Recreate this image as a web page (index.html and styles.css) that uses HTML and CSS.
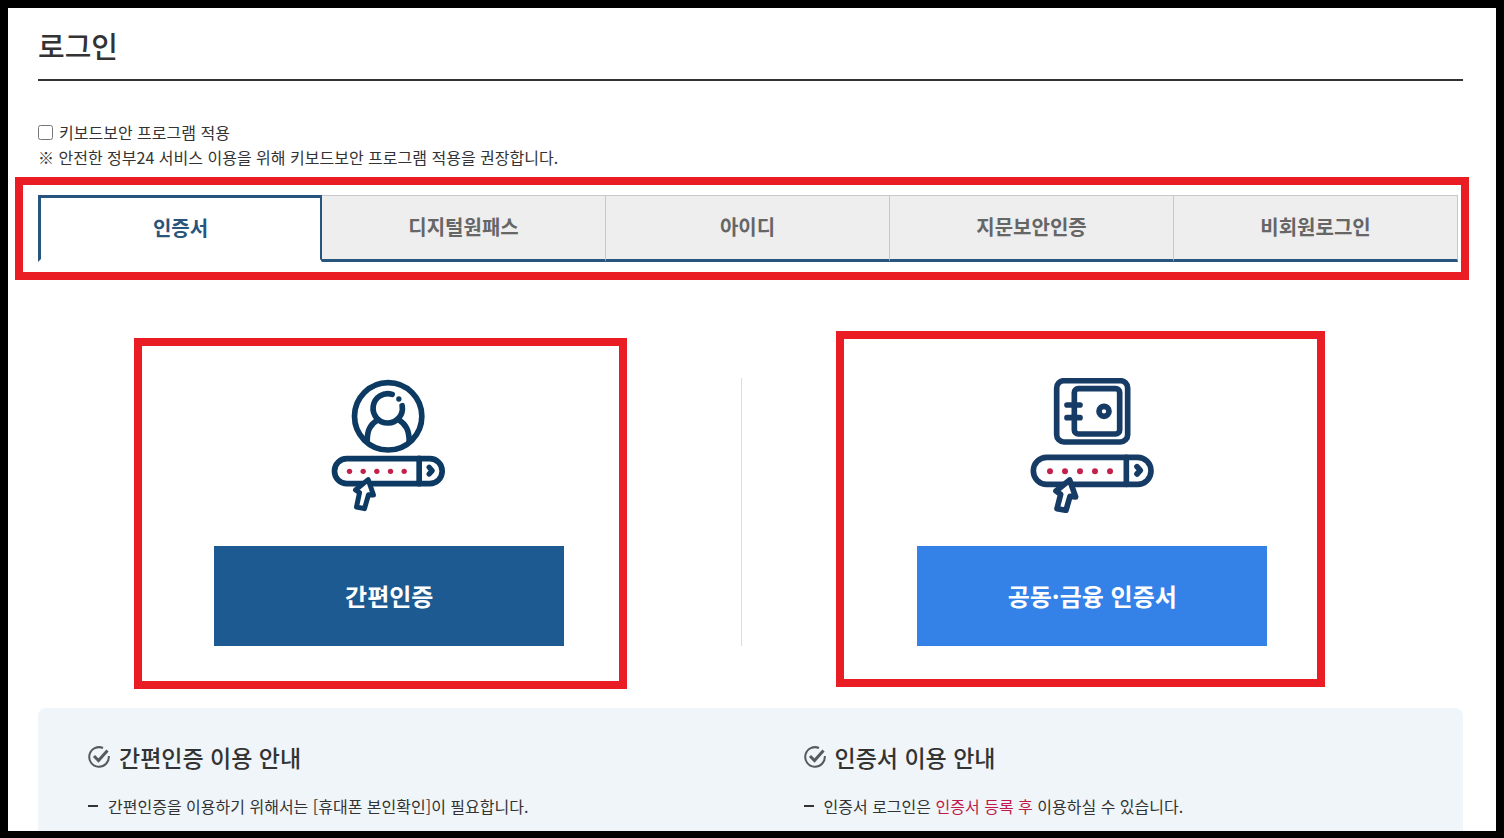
FILE: index.html
```
<!DOCTYPE html>
<html lang="ko">
  <head>
    <meta charset="UTF-8" />
    <meta name="viewport" content="width=device-width, initial-scale=1.0" />
    <title>로그인</title>
    <link rel="stylesheet" href="styles.css">
  </head>
  <body>
    <h1>로그인</h1>

    <div class="security">
      <div class="security-row">
        <input type="checkbox" id="keyboardSecurity" />
        <label for="keyboardSecurity">키보드보안 프로그램 적용</label>
      </div>
      <p>※ 안전한 정부24 서비스 이용을 위해 키보드보안 프로그램 적용을 권장합니다.</p>
    </div>

    <div class="tabs marked" role="tablist">
      <button type="button" class="tab active" role="tab" aria-selected="true">인증서</button>
      <button type="button" class="tab" role="tab">디지털원패스</button>
      <button type="button" class="tab" role="tab">아이디</button>
      <button type="button" class="tab" role="tab">지문보안인증</button>
      <button type="button" class="tab" role="tab">비회원로그인</button>
    </div>

    <div class="methods">
      <div class="method-col">
        <div class="method simple marked">
          <svg width="117" height="135" viewBox="33 24 350 405" fill="none" stroke="#0d3a63" stroke-width="17" stroke-linecap="round" stroke-linejoin="round" aria-hidden="true">
            <circle cx="204" cy="139" r="101" />
            <path d="M216 73 A44 44 0 1 0 246 107" />
            <path d="M141 214 C141 180 150 163 174 149 M267 214 C267 180 257 163 235 149" />
            <circle cx="236" cy="87" r="8" fill="#0d3a63" stroke="none" />
            <rect x="43" y="266" width="323" height="75" rx="37" />
            <path d="M297 265 V341" />
            <path d="M327 292 L336 302 L327 312" stroke-width="16" />
            <g fill="#c4214a" stroke="none">
              <circle cx="88" cy="304" r="8" />
              <circle cx="129" cy="304" r="8" />
              <circle cx="170" cy="304" r="8" />
              <circle cx="211" cy="304" r="8" />
              <circle cx="252" cy="304" r="8" />
            </g>
            <path d="M144 329 L106 360 L118 368 L109 411 L133 416 L145 374 L160 375 Z" fill="#fff" stroke-width="15" />
          </svg>
          <button type="button" class="method-btn">간편인증</button>
        </div>
      </div>
      <div class="method-col">
        <div class="method cert marked">
          <svg width="125" height="135" viewBox="31 24 375 405" fill="none" stroke="#163c66" stroke-width="17" stroke-linecap="round" stroke-linejoin="round" aria-hidden="true">
            <rect x="111" y="32" width="213" height="184" rx="22" />
            <rect x="164" y="56" width="136" height="136" rx="12" />
            <path d="M142 105 H181 M142 143 H181" />
            <circle cx="253" cy="124" r="15" />
            <rect x="41" y="262" width="353" height="81" rx="40" />
            <path d="M320 262 V343" />
            <path d="M352 290 L362 301 L352 312" />
            <g fill="#c4214a" stroke="none">
              <circle cx="91" cy="304" r="9" />
              <circle cx="136" cy="304" r="9" />
              <circle cx="181" cy="304" r="9" />
              <circle cx="226" cy="304" r="9" />
              <circle cx="271" cy="304" r="9" />
            </g>
            <path d="M150 330 L109 363 L123 373 L112 416 L139 421 L151 379 L168 381 Z" fill="#fff" />
          </svg>
          <button type="button" class="method-btn">공동·금융 인증서</button>
        </div>
      </div>
    </div>

    <div class="guide">
      <section>
        <h2>
          <svg class="check" viewBox="0 0 22 22" fill="none" stroke="#555a5e" stroke-width="2" aria-hidden="true">
            <path d="M15 2 A9.8 9.8 0 1 0 20.8 10" />
            <path d="M6 10 L10.5 14.5 L19.5 4.5" stroke-width="3" />
          </svg>
          간편인증 이용 안내
        </h2>
        <ul>
          <li>간편인증을 이용하기 위해서는 [휴대폰 본인확인]이 필요합니다.</li>
        </ul>
      </section>
      <section>
        <h2>
          <svg class="check" viewBox="0 0 22 22" fill="none" stroke="#555a5e" stroke-width="2" aria-hidden="true">
            <path d="M15 2 A9.8 9.8 0 1 0 20.8 10" />
            <path d="M6 10 L10.5 14.5 L19.5 4.5" stroke-width="3" />
          </svg>
          인증서 이용 안내
        </h2>
        <ul>
          <li>인증서 로그인은 <em>인증서 등록 후</em> 이용하실 수 있습니다.</li>
        </ul>
      </section>
    </div>
  </body>
</html>
```
FILE: styles.css
```
* {
  box-sizing: border-box;
}
body {
  display: flex;
  flex-direction: column;
  min-height: 100vh;
  margin: 0;
  padding: 16px 33px 0 30px;
  border: 8px solid #000;
  border-bottom-width: 7px;
  background-color: #fff;
  color: #333;
  font-family: "Noto Sans CJK KR", sans-serif;
  font-size: 16px;
  line-height: 24px;
}
h1 {
  margin: 0;
  padding-bottom: 12px;
  border-bottom: 2px solid #333;
  font-size: 29px;
  font-weight: 500;
  line-height: 43px;
}
.security {
  margin-top: 39px;
  line-height: 25px;
}
.security-row {
  display: flex;
  align-items: center;
}
.security-row input {
  width: 15px;
  height: 15px;
  margin: 0 6px 0 0;
}
.security p {
  margin: 0;
}

/* red frame around the parts to look at */
.marked {
  position: relative;
}
.marked::after {
  content: "";
  position: absolute;
  inset: -18px -11px -18px -23px;
  border: 8px solid #ea1c24;
  pointer-events: none;
}

.tabs {
  display: grid;
  grid-template-columns: repeat(5, 1fr);
  margin: 25px 5px 0 0;
}
.tab {
  height: 67px;
  padding: 0 0 2px;
  border: 1px solid #c8c8c8;
  border-left: none;
  border-bottom: 3px solid #28557d;
  background-color: #eee;
  color: #666;
  font-family: inherit;
  font-size: 20px;
  font-weight: 700;
  cursor: pointer;
}
.tab.active {
  border: 3px solid #28557d;
  border-right-width: 2px;
  border-bottom-color: #fff;
  background-color: #fff;
  color: #28557d;
}

.methods {
  display: grid;
  grid-template-columns: 1fr 1fr;
  margin: 116px 20px 62px 0;
}
.method-col {
  display: flex;
  justify-content: center;
}
.method-col:last-child {
  border-left: 1px solid #ddd;
}
.method {
  display: flex;
  flex-direction: column;
  align-items: center;
  gap: 33px;
  width: 350px;
}
.simple::after {
  inset: -40px -63px -43px -80px;
}
.cert::after {
  inset: -47px -58px -41px -81px;
}
.method-btn {
  width: 100%;
  height: 100px;
  padding: 0 0 2px;
  border: none;
  background-color: #1d5a92;
  color: #fff;
  font-family: inherit;
  font-size: 24px;
  font-weight: 700;
  cursor: pointer;
}
.cert .method-btn {
  background-color: #3482e8;
}

.guide {
  display: grid;
  flex: 1;
  grid-template-columns: 1fr 1fr;
  gap: 56px;
  padding: 32px 0 0 50px;
  border-radius: 8px 8px 0 0;
  background-color: #eff5f9;
}
.guide h2 {
  display: flex;
  align-items: center;
  gap: 9px;
  margin: 0 0 20px;
  font-size: 23px;
  font-weight: 500;
  line-height: 34px;
}
.check {
  width: 22px;
  height: 22px;
}
.guide ul {
  margin: 0;
  padding: 0;
  list-style: none;
}
.guide li {
  display: flow-root;
}
.guide li::before {
  content: "";
  float: left;
  width: 10px;
  height: 2px;
  margin: 11px 10px 0 0;
  background-color: #333;
}
.guide em {
  color: #c01848;
  font-style: normal;
}
```
